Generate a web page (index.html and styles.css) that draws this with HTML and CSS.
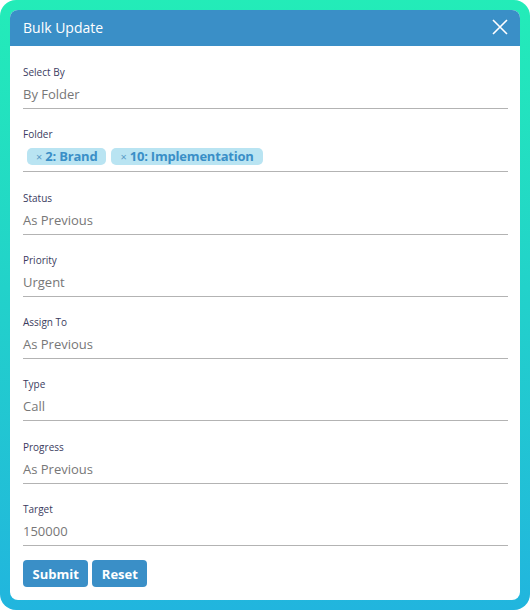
FILE: index.html
```html
<!DOCTYPE html>
<html lang="en">
<head>
  <meta charset="UTF-8">
  <meta name="viewport" content="width=device-width, initial-scale=1.0">
  <title>Bulk Update</title>
  <link rel="stylesheet" href="styles.css">
</head>
<body>
  <!-- Modal frame -->
  <div class="frame">
    <div class="modal">
      <div class="modal-header">
        <span class="modal-title">Bulk Update</span>
        <svg class="close" width="16" height="16" viewBox="0 0 16 16">
          <path d="M1 1 L15 15 M15 1 L1 15" stroke="#fff" stroke-width="1.6" fill="none"/>
        </svg>
      </div>
      <form class="modal-body">
        <div class="field">
          <label>Select By</label>
          <div class="value">By Folder</div>
        </div>
        <div class="field">
          <label>Folder</label>
          <div class="value tags">
            <span class="tag"><span class="x">×</span> 2: Brand</span>
            <span class="tag"><span class="x">×</span> 10: Implementation</span>
          </div>
        </div>
        <div class="field">
          <label>Status</label>
          <div class="value">As Previous</div>
        </div>
        <div class="field">
          <label>Priority</label>
          <div class="value">Urgent</div>
        </div>
        <div class="field">
          <label>Assign To</label>
          <div class="value">As Previous</div>
        </div>
        <div class="field">
          <label>Type</label>
          <div class="value">Call</div>
        </div>
        <div class="field">
          <label>Progress</label>
          <div class="value">As Previous</div>
        </div>
        <div class="field">
          <label>Target</label>
          <div class="value">150000</div>
        </div>
        <div class="actions">
          <button type="button" class="btn btn-submit">Submit</button>
          <button type="button" class="btn btn-reset">Reset</button>
        </div>
      </form>
    </div>
  </div>
</body>
</html>
```

FILE: styles.css
```css
/* General Styling */
body {
  margin: 0;
  background: #fff;
  font-family: 'Open Sans', 'Liberation Sans', sans-serif;
}

.frame {
  width: 530px;
  height: 610px;
  box-sizing: border-box;
  padding: 10px;
  border-radius: 16px;
  background: linear-gradient(180deg, #23ecb8, #21b5de);
}

.modal {
  height: 100%;
  background: #fff;
  border-radius: 8px;
  overflow: hidden;
}

.modal-header {
  height: 36px;
  background: #3a8fc7;
  display: flex;
  align-items: center;
  justify-content: space-between;
  padding: 0 12px 2px 13px;
  box-sizing: border-box;
}

.modal-title {
  color: #fff;
  font-size: 14px;
}

.close {
  display: block;
}

.modal-body {
  padding: 18px 12px 0 13px;
}

.field {
  margin-bottom: 17.3px;
}

.field label {
  display: block;
  font-size: 10px;
  line-height: 16px;
  font-weight: 500;
  color: #3b3b5e;
}

.value {
  height: 28px;
  line-height: 28px;
  font-size: 13px;
  color: #777;
  border-bottom: 1px solid #b3b3b3;
}

.tags {
  display: flex;
  align-items: center;
  gap: 5px;
  padding-left: 4px;
  height: 29px;
}

.tag {
  background: #b9e4f2;
  color: #3a8fc7;
  font-weight: 700;
  font-size: 13px;
  line-height: 17px;
  padding: 0 9px;
  border-radius: 5px;
  letter-spacing: -0.2px;
}

.tag .x {
  font-weight: 400;
  font-size: 11px;
  color: #5a9bc6;
}

.actions {
  display: flex;
  gap: 4px;
  margin-top: -3px;
}

.btn {
  border: none;
  background: #3a8fc7;
  color: #fff;
  font-family: inherit;
  font-weight: 700;
  font-size: 13px;
  height: 27px;
  border-radius: 4px;
  padding: 0 9.5px;
}
```
